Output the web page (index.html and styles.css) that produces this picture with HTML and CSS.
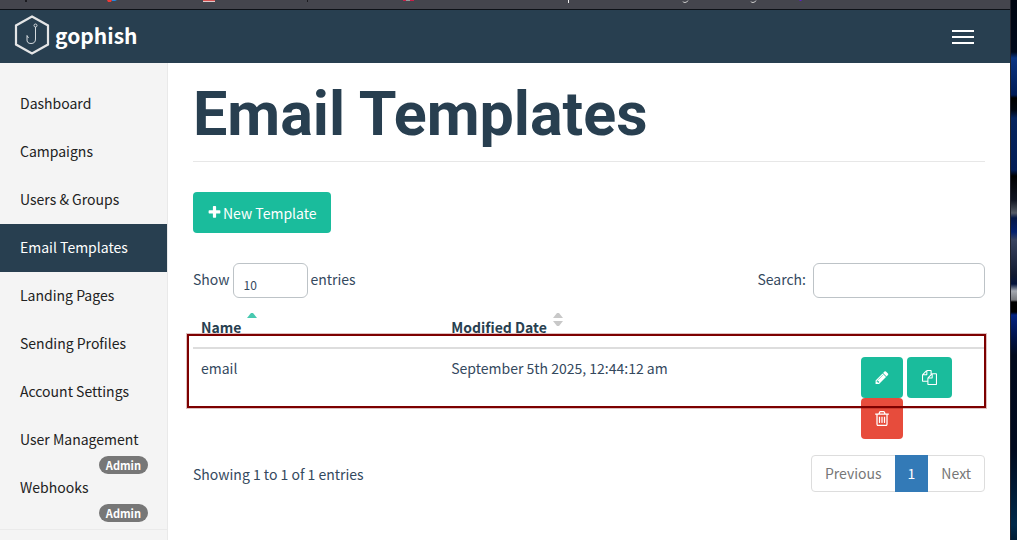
FILE: index.html
```html
<!DOCTYPE html>
<html lang="en">
<head>
<meta charset="utf-8">
<title>Email Templates - Gophish</title>
<link rel="stylesheet" href="styles.css">
</head>
<body>
<div class="desktop">
  <div class="browser">
    <div class="bookmarks">
      <svg width="820" height="9" viewBox="0 0 820 9" aria-hidden="true">
        <path fill="#1b1b20" d="M25 0h2v2h-2zM307 0h1v2h-1z"/>
        <path fill="#f03a35" d="M107 0h5l-1 2h-3z"/><path fill="#2386e0" d="M112 0h5l-2 1h-3z"/>
        <path fill="#d4504f" d="M203 0h12v1h-12z"/><path fill="#e0c8ca" d="M203 1h12v1h-12z"/>
        <path fill="#c81f48" d="M403 0h11v1h-11z"/><path fill="#999" d="M406 0h4v1h-4z"/>
        <path fill="#eee" d="M568 0h1v3h-1z"/>
        <path fill="none" stroke="#ccc" d="M683 1.500q0 1 2 1t3-2M751 1.500q0 1 2 1t3-2"/>
        <path fill="#5c1ecb" d="M799 0h3l-1 1h-1z"/>
      </svg>
    </div>
    <header class="navbar">
      <a class="brand" href="#">
        <svg class="brand-logo" width="36" height="40" viewBox="0 0 36 40" fill="none" aria-hidden="true">
          <path d="M18 1.500 34 10.500V29.500L18 38.500 2 29.500V10.500Z" stroke="#e4e5e6" stroke-width="2.200"/>
          <circle cx="21.500" cy="10.500" r="1.500" stroke="#d5dade"/>
          <path d="M21.500 12V24q0 4.500-4.500 4.500T13 24V20.500L14.500 23" stroke="#d5dade"/>
        </svg>
        <span>gophish</span>
      </a>
      <button class="menu-toggle" type="button" aria-label="Toggle navigation"><i></i><i></i><i></i></button>
    </header>
    <div class="layout">
      <nav class="sidebar">
        <ul>
          <li><a href="#">Dashboard</a></li>
          <li><a href="#">Campaigns</a></li>
          <li><a href="#">Users &amp; Groups</a></li>
          <li><a class="active" href="#">Email Templates</a></li>
          <li><a href="#">Landing Pages</a></li>
          <li><a href="#">Sending Profiles</a></li>
          <li><a href="#">Account Settings</a></li>
          <li><a href="#">User Management<span class="badge">Admin</span></a></li>
          <li><a href="#">Webhooks<span class="badge">Admin</span></a></li>
        </ul>
      </nav>
      <main class="content">
        <h1>Email Templates</h1>
        <button class="btn btn-new" type="button">
          <svg class="icon" viewBox="0 0 1792 1792" aria-hidden="true"><path d="M1600 736v192q0 40-28 68t-68 28h-416v416q0 40-28 68t-68 28h-192q-40 0-68-28t-28-68v-416h-416q-40 0-68-28t-28-68v-192q0-40 28-68t68-28h416v-416q0-40 28-68t68-28h192q40 0 68 28t28 68v416h416q40 0 68 28t28 68z"/></svg>
          New Template
        </button>
        <div class="controls">
          <div class="length">
            <label for="length">Show</label>
            <select id="length"><option>10</option><option>25</option><option>50</option></select>
            <span>entries</span>
          </div>
          <div class="search">
            <label for="search">Search:</label>
            <input id="search" type="search">
          </div>
        </div>
        <div class="table-wrap">
          <table>
            <thead>
              <tr>
                <th class="col-name" scope="col"><span class="sort">Name <svg width="10" height="14" viewBox="0 0 10 14" aria-hidden="true"><path fill="#48c9b0" d="M0 5 4 0h2l4 5z"/></svg></span></th>
                <th class="col-date" scope="col"><span class="sort">Modified Date <svg width="10" height="14" viewBox="0 0 10 14" aria-hidden="true"><path fill="#c8c8c8" d="M0 5 4 0h2l4 5zM0 8h10l-4 5H4z"/></svg></span></th>
                <th class="col-actions" scope="col" aria-label="Actions"></th>
              </tr>
            </thead>
            <tbody>
              <tr>
                <td>email</td>
                <td>September 5th 2025, 12:44:12 am</td>
                <td>
                  <div class="actions">
                    <button class="btn" type="button" aria-label="Edit"><svg class="icon icon-pencil" viewBox="128 0 1536 1792" aria-hidden="true"><path d="M491 1536l91-91-235-235-91 91v107h128v128h107zm523-928q0-22-22-22-10 0-17 7l-542 542q-7 7-7 17 0 22 22 22 10 0 17-7l542-542q7-7 7-17zm-54-192l416 416-832 832h-416v-416zm683 96q0 53-37 90l-166 166-416-416 166-165q36-38 90-38 53 0 91 38l235 234q37 39 37 91z"/></svg></button>
                    <button class="btn" type="button" aria-label="Copy"><svg class="icon icon-copy" viewBox="0 0 1792 1792" aria-hidden="true"><path d="M1696 384q40 0 68 28t28 68v1216q0 40-28 68t-68 28h-960q-40 0-68-28t-28-68v-288h-544q-40 0-68-28t-28-68v-672q0-40 20-88t48-76l408-408q28-28 76-48t88-20h416q40 0 68 28t28 68v328q68-40 128-40h416zm-544 213l-299 299h299v-299zm-640-384l-299 299h299v-299zm196 647l316-316v-416h-384v416q0 40-28 68t-68 28h-416v640h512v-256q0-40 20-88t48-76zm956 804v-1152h-384v416q0 40-28 68t-68 28h-416v640h896z"/></svg></button>
                    <button class="btn btn-danger" type="button" aria-label="Delete"><svg class="icon icon-trash" viewBox="192 128 1408 1536" aria-hidden="true"><path d="M704 736v576q0 14-9 23t-23 9h-64q-14 0-23-9t-9-23v-576q0-14 9-23t23-9h64q14 0 23 9t9 23zm256 0v576q0 14-9 23t-23 9h-64q-14 0-23-9t-9-23v-576q0-14 9-23t23-9h64q14 0 23 9t9 23zm256 0v576q0 14-9 23t-23 9h-64q-14 0-23-9t-9-23v-576q0-14 9-23t23-9h64q14 0 23 9t9 23zm128 724v-948h-896v948q0 22 7 40.500t14.500 27 10.500 8.500h832q3 0 10.500-8.500t14.500-27 7-40.500zm-672-1076h448l-48-117q-7-9-17-11h-317q-10 2-17 11zm928 32v64q0 14-9 23t-23 9h-96v948q0 83-47 143.500t-113 60.500h-832q-66 0-113-58.500t-47-141.500v-952h-96q-14 0-23-9t-9-23v-64q0-14 9-23t23-9h309l70-167q15-37 54-63t79-26h320q40 0 79 26t54 63l70 167h309q14 0 23 9t9 23z"/></svg></button>
                  </div>
                </td>
              </tr>
            </tbody>
          </table>
          <div class="highlight"></div>
        </div>
        <div class="table-footer">
          <span>Showing 1 to 1 of 1 entries</span>
          <nav class="pagination" aria-label="Pages">
            <a href="#">Previous</a><a class="current" href="#">1</a><a href="#">Next</a>
          </nav>
        </div>
      </main>
    </div>
  </div>
  <div class="wallpaper"></div>
</div>
</body>
</html>
```
FILE: styles.css
```css
* { box-sizing: border-box; }

body {
  margin: 0;
  font-family: "Noto Sans CJK SC", "Noto Sans", sans-serif;
  font-size: 14px;
  line-height: 20px;
  color: #34495e;
  overflow: hidden;
}

button, input, select { font-family: inherit; font-size: inherit; color: inherit; }
a { color: inherit; text-decoration: none; }

.desktop { display: flex; min-height: 100vh; }
.browser { flex: 1; display: flex; flex-direction: column; min-width: 0; background: #fff; }

.wallpaper {
  width: 7px;
  border-left: 1px solid #22232c;
  background: linear-gradient(#000611 0, #00091c 52px, #0a3482 58px, #001c56 95px, #000 98px, #000612 110px, #05245e 118px, #021d56 170px, #000 176px, #111522 200px, #555b66 213px, #041746 218px, #03206d 232px, #39435f 240px, #111a30 275px, #03123a 284px, #a4a8b0 291px, #77797e 300px, #000 302px, #000 312px, #032382 315px, #001247 338px, #01091c 355px, #000a1e 450px, #00294a 525px, #001c35);
}

.bookmarks { height: 10px; overflow: hidden; background: #44454d; border-bottom: 1px solid #0d1117; }
.bookmarks svg { display: block; }

.navbar {
  display: flex;
  justify-content: space-between;
  align-items: center;
  height: 53px;
  padding: 0 36px 0 14px;
  background: #283f50;
}
.brand { display: flex; align-items: center; gap: 5px; padding-bottom: 4px; color: #fff; font-size: 21px; font-weight: 700; line-height: 32px; }
.menu-toggle { display: grid; gap: 4px; width: 22px; padding: 0; border: 0; background: none; }
.menu-toggle i { height: 2px; background: #fff; }

.layout { flex: 1; display: flex; }

.sidebar { width: 168px; flex: none; background: #f4f4f4; border-right: 1px solid #e9e9e9; }
.sidebar ul { list-style: none; margin: 0; padding: 17px 0; border-bottom: 1px solid #eaeaea; }
.sidebar a { position: relative; display: block; padding: 13px 20px 15px; color: #222; white-space: nowrap; }
.sidebar .active { background: #283f50; color: #fff; }
.badge {
  position: absolute;
  right: 19px;
  bottom: -10px;
  z-index: 1;
  padding: 0 7px;
  border-radius: 9px;
  background: #777;
  color: #fff;
  font-size: 11px;
  font-weight: 700;
  line-height: 18px;
}

.content { flex: 1; min-width: 0; padding: 15px 25px 0; }

h1 {
  margin: 0 0 30px;
  padding-bottom: 11px;
  border-bottom: 1px solid #e7e7e7;
  font-family: Roboto, sans-serif;
  font-size: 61px;
  font-weight: 700;
  line-height: 72px;
  color: #283f50;
}

.btn {
  display: inline-flex;
  align-items: center;
  justify-content: center;
  height: 41px;
  padding: 0 14px;
  border: 0;
  border-radius: 4px;
  background: #1abc9c;
  color: #fff;
}
.btn-new { gap: 1px; }
.btn-danger { background: #e74c3c; }
.icon { width: 15px; height: 15px; fill: currentColor; }

.controls { display: flex; justify-content: space-between; margin-top: 30px; }
.length, .search { display: flex; align-items: center; gap: 3px; height: 35px; }
.search { gap: 7px; }
.controls label, .controls span { padding-bottom: 3px; }
.controls select, .controls input {
  appearance: none;
  height: 35px;
  border: 1px solid #bdc3c7;
  border-radius: 6px;
  background: #fff;
}
.controls select { width: 75px; padding: 8px 10px 0; font-size: 12px; }
.controls input { width: 172px; padding: 4px 8px; }

.table-wrap { position: relative; margin-top: 12px; }
table { width: 100%; border-collapse: separate; border-spacing: 0; table-layout: fixed; }
th { height: 39px; padding: 0 8px 10px; border-bottom: 2px solid #ddd; text-align: left; vertical-align: bottom; color: #283f50; }
td { padding: 8px; vertical-align: top; line-height: 22px; }
.col-name { width: 31.600%; }
.col-date { width: 51.700%; }
.sort { display: flex; align-items: flex-end; gap: 6px; }
.sort svg { margin-bottom: 10px; }
.actions { display: flex; flex-wrap: wrap; column-gap: 4px; }
.icon-pencil, .icon-trash { width: 14px; }
.icon-copy { width: 17px; }

.highlight {
  position: absolute;
  inset: 24px -1px 39px -6px;
  border: 2px solid #7d0000;
  box-shadow: 0 0 0 1px #7d000040;
  pointer-events: none;
}

.table-footer { display: flex; justify-content: space-between; align-items: center; margin-top: 8px; }
.pagination { display: flex; border: 1px solid #ddd; border-radius: 4px; }
.pagination a { padding: 8px 13px; line-height: 19px; color: #777; }
.pagination .current { margin: -1px 0; padding: 9px 13px; background: #337ab7; color: #fff; }
```
